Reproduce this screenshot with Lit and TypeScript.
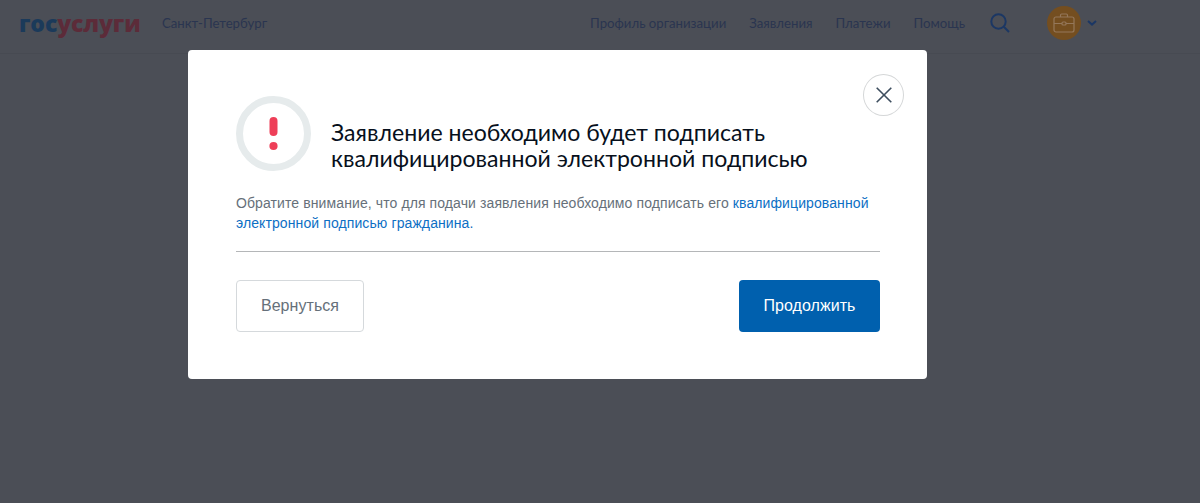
import { LitElement, html, css } from "lit";
import { customElement } from "lit/decorators.js";

@customElement("app-root")
export class AppRoot extends LitElement {
  static styles = css`
    :host { display: block; width: 1200px; height: 503px; position: relative; overflow: hidden; background: #4b4e56; font-family: "Liberation Sans", Arial, sans-serif; }
    .header { height: 54px; box-sizing: border-box; border-bottom: 1px solid #474a52; display: flex; align-items: center; padding: 0 103px 8px 19px; font-family: Lato, "Noto Sans", sans-serif; color: #2a3550; font-size: 13.2px; }
    .logo { font-family: "Open Sans", "Noto Sans", sans-serif; font-weight: 800; font-size: 23px; letter-spacing: -0.15px; width: 143px; line-height: 46px; }
    .gos { color: #1b3a5a; }
    .usl { color: #5c2b39; }
    .city { flex: 1; }
    .nav { display: flex; gap: 23px; margin-right: 25px; }
    .search { width: 20px; height: 20px; margin-right: 37px; display: block; }
    .avatar { width: 34px; height: 34px; border-radius: 50%; background: #744e20; display: flex; align-items: center; justify-content: center; margin-right: 6px; }
    .chev { width: 10px; height: 6px; display: block; }
    .modal { position: absolute; left: 188px; top: 50px; width: 739px; height: 329px; box-sizing: border-box; background: #fff; border-radius: 4px; padding: 46px 47px 0 48px; }
    .close { position: absolute; left: 675px; top: 24px; width: 41px; height: 42px; box-sizing: border-box; border: 1px solid #d5d7d8; border-radius: 50%; background: #fff; padding: 0; display: flex; align-items: center; justify-content: center; }
    .close svg { width: 16px; height: 16px; display: block; }
    .head { display: flex; align-items: flex-start; gap: 20px; }
    .warn { width: 75px; height: 75px; display: block; flex: none; }
    .title { margin: 23px 0 0; font-family: Lato, "Noto Sans", sans-serif; font-weight: 400; font-size: 23.1px; line-height: 26px; color: #07101c; }
    .text { margin: 22px 0 0; font-size: 14px; letter-spacing: 0.1px; line-height: 20px; color: #66707a; }
    .text a { color: #0d6fc4; text-decoration: none; }
    .rule { height: 1px; background: #b4b6b8; margin-top: 18px; }
    .actions { display: flex; justify-content: space-between; margin-top: 28px; }
    .btn { height: 52px; box-sizing: border-box; border-radius: 4px; font-family: "Liberation Sans", Arial, sans-serif; font-size: 16px; letter-spacing: 0.05px; padding: 0; }
    .back { width: 128px; background: #fff; border: 1px solid #d5d9dc; color: #66707a; }
    .next { width: 141px; background: #0060ae; border: 0; color: #fff; }
  `;

  render() {
    return html`
      <div class="header">
        <div class="logo"><span class="gos">гос</span><span class="usl">услуги</span></div>
        <div class="city">Санкт-Петербург</div>
        <div class="nav"><span>Профиль организации</span><span>Заявления</span><span>Платежи</span><span>Помощь</span></div>
        <svg class="search" viewBox="0 0 20 20" fill="none" stroke="#1b3764" stroke-width="2"><circle cx="8.5" cy="8.5" r="7.2"/><path d="M13.8 13.8 19 19"/></svg>
        <div class="avatar">
          <svg width="22" height="20" viewBox="0 0 22 20" fill="none" stroke="#94775a" stroke-width="1.2"><path d="M7.5 4V2.2C7.5 1.5 8 1 8.7 1h4.6c.7 0 1.2.5 1.2 1.2V4"/><rect x="1" y="4" width="20" height="15" rx="2"/><path d="M1 10.5h8M13 10.5h8"/><rect x="9" y="9" width="4" height="3" rx="1"/></svg>
        </div>
        <svg class="chev" viewBox="0 0 10 6" fill="none" stroke="#1b3764" stroke-width="2"><path d="M1 1l4 3.6L9 1"/></svg>
      </div>
      <div class="modal">
        <button class="close" aria-label="Закрыть">
          <svg viewBox="0 0 16 16" fill="none" stroke="#3d4d5e" stroke-width="1.6"><path d="M.7.7l14.6 14.6M15.3.7.7 15.3"/></svg>
        </button>
        <div class="head">
          <svg class="warn" viewBox="0 0 75 75" fill="none"><circle cx="37.5" cy="37.5" r="34" stroke="#e6ebec" stroke-width="7"/><rect x="33.5" y="21" width="8" height="19" rx="4" fill="#ee3f58"/><circle cx="37.5" cy="50" r="4.1" fill="#ee3f58"/></svg>
          <h1 class="title">Заявление необходимо будет подписать<br />квалифицированной электронной подписью</h1>
        </div>
        <p class="text">Обратите внимание, что для подачи заявления необходимо подписать его <a>квалифицированной<br />электронной подписью гражданина.</a></p>
        <div class="rule"></div>
        <div class="actions">
          <button class="btn back">Вернуться</button>
          <button class="btn next">Продолжить</button>
        </div>
      </div>
    `;
  }
}
